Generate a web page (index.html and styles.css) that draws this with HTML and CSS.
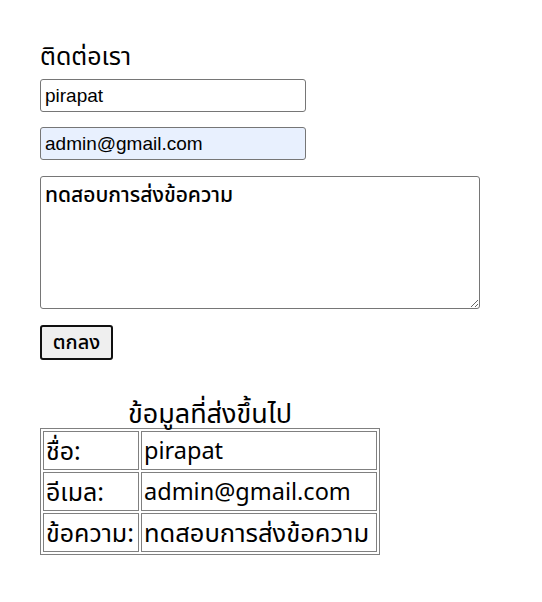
FILE: index.html
```html
<!DOCTYPE html>
<html lang="th">
<head>
<meta charset="utf-8">
<link rel="stylesheet" href="styles.css">
</head>
<body>
<div class="page">
  <form class="contact">
    <h2 class="title">ติดต่อเรา</h2>
    <input class="field" type="text" value="pirapat">
    <input class="field autofill" type="text" value="admin@gmail.com">
    <textarea class="message">ทดสอบการส่งข้อความ</textarea>
    <button class="submit" type="button">ตกลง</button>
  </form>
  <table class="result">
    <caption class="caption">ข้อมูลที่ส่งขึ้นไป</caption>
    <tr><td class="label">ชื่อ:</td><td class="value">pirapat</td></tr>
    <tr><td class="label">อีเมล:</td><td class="value">admin@gmail.com</td></tr>
    <tr><td class="label">ข้อความ:</td><td class="value thai">ทดสอบการส่งข้อความ</td></tr>
  </table>
</div>
</body>
</html>
```
FILE: styles.css
```css
html, body { margin: 0; padding: 0; background: #fff; }
body { font-family: "Noto Sans", "Noto Sans Thai", "DejaVu Sans", sans-serif; color: #000; }
.page { padding: 38px 0 0 40px; }
.contact { display: flex; flex-direction: column; align-items: flex-start; }
.title { font-size: 25px; font-weight: normal; margin: 0 0 6px 0; line-height: 35px; height: 35px; }
.field {
  box-sizing: border-box; width: 266px; height: 33px; margin: 0 0 15px 0;
  font-family: "Liberation Sans", Arial, sans-serif; font-size: 19px;
  border: 1px solid #767676; border-radius: 3px; padding: 1px 4px; background: #fff; color: #000;
}
.autofill { background: #e8f0fe; margin-bottom: 16px; }
.message {
  box-sizing: border-box; width: 440px; height: 133px; margin: 0 0 16px 0;
  border: 1px solid #767676; border-radius: 3px; padding: 2px 4px;
  font-family: "Noto Sans", "Noto Sans Thai", sans-serif; font-size: 21px; font-weight: 500; line-height: 30px; resize: both; color: #000;
}
.submit {
  box-sizing: border-box; width: 73px; height: 35px; margin: 0;
  border: 2px solid #101010; border-radius: 3px; background: #efefef;
  font-family: "Noto Sans", "Noto Sans Thai", sans-serif; font-size: 20px; font-weight: 500; color: #000; padding: 0;
}
.result {
  margin-top: 38px; border: 1px solid #808080; border-spacing: 2px;
  font-family: "Noto Sans", "Noto Sans Thai", sans-serif; font-size: 23.5px;
}
.caption { font-size: 27px; line-height: 30px; }
.result td { border: 1px solid #808080; padding: 1px 1px 1px 2px; height: 35px; line-height: 33px; white-space: nowrap; }
.label { width: 91px; font-size: 25px; }
.value { width: 231px; }
.result td.thai { font-size: 25.5px; }
```
